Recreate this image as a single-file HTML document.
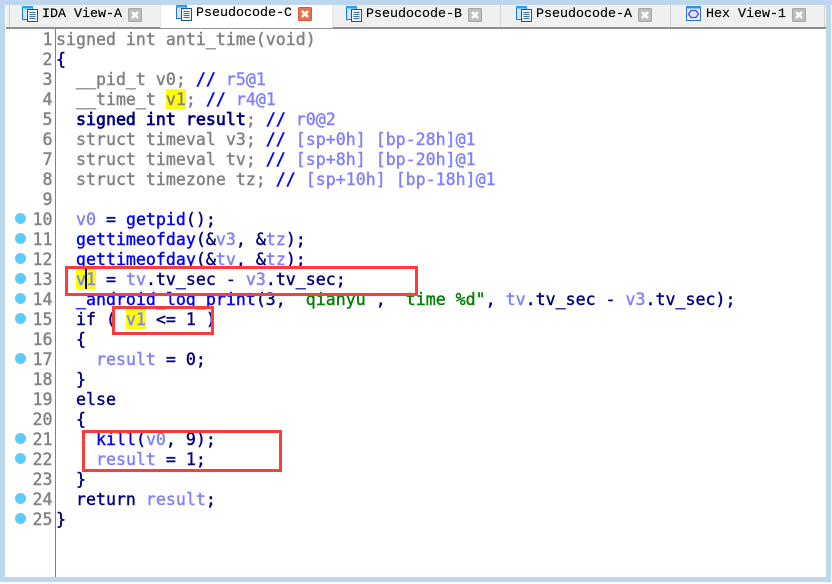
<!DOCTYPE html>
<html><head><meta charset="utf-8"><style>
html,body{margin:0;padding:0;background:#fff;}
#r{position:relative;width:832px;height:584px;overflow:hidden;background:#fff;}
.a{position:absolute;}
.tabbar{left:6px;top:5px;width:820px;height:22px;background:#f0f0f0;border-bottom:2px solid #8f8f8f;}
.sep{top:5px;width:1px;height:22px;background:#d4d4d4;}
.t{position:absolute;font:13.33px/16px "Liberation Mono",monospace;color:#000;white-space:pre;letter-spacing:0;-webkit-text-stroke:.15px #000;}
.l{position:absolute;left:56px;margin-top:1px;height:20px;font:16.6px/20px "DejaVu Sans Mono",monospace;white-space:pre;color:#000080;-webkit-text-stroke:.4px currentColor;}
.n{position:absolute;left:22px;margin-top:1px;width:30.5px;text-align:right;height:20px;font:16.6px/20px "DejaVu Sans Mono",monospace;color:#808080;-webkit-text-stroke:.4px #808080;}
.d{position:absolute;left:15px;width:11px;height:11px;border-radius:50%;background:#5ccbff;}
.g{color:#808080}.b{color:#0000ff}.v{color:#8080ff}.s{color:#008000}
.q{color:transparent;-webkit-text-stroke:0}
.k{-webkit-text-stroke:.7px #000080}
.y{position:absolute;width:20px;height:20px;background:#ffff00;}
.rb{position:absolute;box-sizing:border-box;border:3px solid #ff3b3b;}
svg{position:absolute;}
</style></head><body><div id="r">
<div class="a" style="left:0;top:0;width:832px;height:5px;background:#bdd7ee"></div>
<div class="a" style="left:0;top:0;width:5px;height:582px;background:#bdd7ee"></div>
<div class="a" style="left:826px;top:0;width:5px;height:582px;background:#bdd7ee"></div>
<div class="a" style="left:0;top:577px;width:831px;height:5px;background:#bdd7ee"></div>
<div class="a tabbar"></div>
<div class="a" style="left:9px;top:5px;width:1px;height:22px;background:#d4d4d4"></div>
<div class="a" style="left:160px;top:5px;width:173px;height:23px;background:#fff;box-shadow:inset 1px 0 #e4e4e4,inset -1px 0 #e4e4e4"></div>
<div class="a sep" style="left:500px"></div>
<div class="a sep" style="left:670px"></div>
<div class="a sep" style="left:824px"></div>

<svg width="0" height="0"><defs>
<g id="doc"><rect x=".5" y=".5" width="10" height="13" fill="#cfe6fb" stroke="#1c74e0"/><rect x="0" y="0" width="11" height="2.5" fill="#2aa0f0"/><rect x="5.5" y="3.5" width="10" height="12" fill="#eef3f8" stroke="#25527f"/><path d="M7.5 6.5h6M7.5 8.5h6M7.5 10.5h6M7.5 12.5h6" stroke="#3d6f9f" fill="none"/></g>
<g id="x"><rect x=".5" y=".5" width="13" height="13" rx="1" fill="#bdbdbd" stroke="#a6a6a6"/><path d="M4 4l6 6M10 4l-6 6" stroke="#fff" stroke-width="2.4"/></g>
<g id="xr"><rect x=".5" y=".5" width="13" height="13" rx="1" fill="#e8734f" stroke="#d9553c"/><path d="M4 4l6 6M10 4l-6 6" stroke="#fff" stroke-width="2.4"/></g>
</defs></svg>

<svg style="left:22px;top:6px" width="16" height="16"><use href="#doc"/></svg>
<div class="t" style="left:42px;top:7px">IDA View-A</div>
<svg style="left:128px;top:8px" width="14" height="14"><use href="#x"/></svg>

<svg style="left:176px;top:5px" width="16" height="16"><use href="#doc"/></svg>
<div class="t" style="left:196px;top:6px">Pseudocode-C</div>
<svg style="left:298px;top:7px" width="14" height="14"><use href="#xr"/></svg>

<svg style="left:346px;top:6px" width="16" height="16"><use href="#doc"/></svg>
<div class="t" style="left:366px;top:7px">Pseudocode-B</div>
<svg style="left:468px;top:8px" width="14" height="14"><use href="#x"/></svg>

<svg style="left:516px;top:6px" width="16" height="16"><use href="#doc"/></svg>
<div class="t" style="left:536px;top:7px">Pseudocode-A</div>
<svg style="left:638px;top:8px" width="14" height="14"><use href="#x"/></svg>

<svg style="left:686px;top:6px" width="15" height="15"><rect x=".5" y=".5" width="14" height="14" fill="#e8f0fb" stroke="#2f6fe6"/><rect x="0" y="0" width="15" height="2.5" fill="#2f8fe8"/><path d="M5 4.5h5l2.5 3.5-2.5 3.5H5L2.5 8z" fill="#dfe6fb" stroke="#3f4fe0" stroke-width="1.3"/></svg>
<div class="t" style="left:706px;top:7px">Hex View-1</div>
<svg style="left:792px;top:8px" width="14" height="14"><use href="#x"/></svg>

<div class="a" style="left:55px;top:29px;width:1px;height:548px;background:#808080"></div>

<div class="y" style="left:166px;top:89px"></div>
<div class="y" style="left:76px;top:269px"></div>
<div class="y" style="left:126px;top:309px"></div>

<div class="d" style="top:213px"></div><div class="d" style="top:233px"></div><div class="d" style="top:253px"></div><div class="d" style="top:273px"></div><div class="d" style="top:293px"></div><div class="d" style="top:313px"></div><div class="d" style="top:353px"></div><div class="d" style="top:433px"></div><div class="d" style="top:453px"></div><div class="d" style="top:493px"></div><div class="d" style="top:513px"></div>

<div class="n" style="top:29px">1</div><div class="n" style="top:49px">2</div><div class="n" style="top:69px">3</div><div class="n" style="top:89px">4</div><div class="n" style="top:109px">5</div><div class="n" style="top:129px">6</div><div class="n" style="top:149px">7</div><div class="n" style="top:169px">8</div><div class="n" style="top:189px">9</div><div class="n" style="top:209px">10</div><div class="n" style="top:229px">11</div><div class="n" style="top:249px">12</div><div class="n" style="top:269px">13</div><div class="n" style="top:289px">14</div><div class="n" style="top:309px">15</div><div class="n" style="top:329px">16</div><div class="n" style="top:349px">17</div><div class="n" style="top:369px">18</div><div class="n" style="top:389px">19</div><div class="n" style="top:409px">20</div><div class="n" style="top:429px">21</div><div class="n" style="top:449px">22</div><div class="n" style="top:469px">23</div><div class="n" style="top:489px">24</div><div class="n" style="top:509px">25</div>

<div class="l g" style="top:29px">signed int anti_time(void)</div>
<div class="l" style="top:49px">{</div>
<div class="l g" style="top:69px">  __pid_t v0; <span class="b">//</span> <span class="v">r5@1</span></div>
<div class="l g" style="top:89px">  __time_t v1; <span class="b">//</span> <span class="v">r4@1</span></div>
<div class="l" style="top:109px">  <span class="k">signed int result</span><span class="g">;</span> <span class="b">//</span> <span class="v">r0@2</span></div>
<div class="l g" style="top:129px">  struct timeval v3; <span class="b">//</span> <span class="v">[sp+0h] [bp-28h]@1</span></div>
<div class="l g" style="top:149px">  struct timeval tv; <span class="b">//</span> <span class="v">[sp+8h] [bp-20h]@1</span></div>
<div class="l g" style="top:169px">  struct timezone tz; <span class="b">//</span> <span class="v">[sp+10h] [bp-18h]@1</span></div>
<div class="l" style="top:209px">  <span class="v">v0</span> = <span class="b">getpid</span>();</div>
<div class="l" style="top:229px">  <span class="b">gettimeofday</span>(&amp;<span class="v">v3</span>, &amp;<span class="v">tz</span>);</div>
<div class="l" style="top:249px">  <span class="b">gettimeofday</span>(&amp;<span class="v">tv</span>, &amp;<span class="v">tz</span>);</div>
<div class="l" style="top:269px">  <span class="v">v1</span> = <span class="v">tv</span>.tv_sec - <span class="v">v3</span>.tv_sec;</div>
<div class="l" style="top:289px">  <span class="b">_android_log_print</span>(3, <span class="q">"</span><span class="s">qianyu</span><span class="q">"</span>, <span class="q">"</span><span class="s">time %d"</span>, <span class="v">tv</span>.tv_sec - <span class="v">v3</span>.tv_sec);</div>
<div class="l" style="top:309px">  if ( <span class="v">v1</span> &lt;= 1 )</div>
<div class="l" style="top:329px">  {</div>
<div class="l" style="top:349px">    <span class="v">result</span> = 0;</div>
<div class="l" style="top:369px">  }</div>
<div class="l" style="top:389px">  else</div>
<div class="l" style="top:409px">  {</div>
<div class="l" style="top:429px">    <span class="b">kill</span>(<span class="v">v0</span>, 9);</div>
<div class="l" style="top:449px">    <span class="v">result</span> = 1;</div>
<div class="l" style="top:469px">  }</div>
<div class="l" style="top:489px">  return <span class="v">result</span>;</div>
<div class="l" style="top:509px">}</div>

<div class="a" style="left:85px;top:269px;width:2px;height:20px;background:#000"></div>

<div class="rb" style="left:65px;top:266px;width:353px;height:30px"></div>
<div class="rb" style="left:112px;top:306px;width:102px;height:29px"></div>
<div class="rb" style="left:82px;top:430px;width:200px;height:42px"></div>
</div></body></html>
